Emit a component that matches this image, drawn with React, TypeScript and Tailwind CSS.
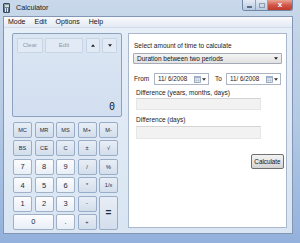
import React from 'react';

const Tri = ({ up = false, className = '' }: { up?: boolean; className?: string }) => (
  <svg viewBox="0 0 6 4" className={className}>
    <path d={up ? 'M0 4 L3 0 L6 4 Z' : 'M0 0 L6 0 L3 4 Z'} fill="currentColor" />
  </svg>
);

const CalIcon = () => (
  <svg viewBox="0 0 8 8" className="w-[7px] h-[7px]">
    <rect x="0.5" y="0.5" width="7" height="7" fill="#e8eef6" stroke="#7d8ea6" strokeWidth="0.8" />
    <rect x="0.5" y="0.5" width="7" height="2" fill="#9fb4d0" />
    <path d="M2.5 3 V7.5 M5 3 V7.5 M0.5 5 H7.5" stroke="#9aa8bb" strokeWidth="0.5" />
  </svg>
);

type Key = { label: string; kind: 'mem' | 'num'; col?: string; row?: string };

const keys: Key[] = [
  { label: 'MC', kind: 'mem' },
  { label: 'MR', kind: 'mem' },
  { label: 'MS', kind: 'mem' },
  { label: 'M+', kind: 'mem' },
  { label: 'M-', kind: 'mem' },
  { label: 'BS', kind: 'mem' },
  { label: 'CE', kind: 'mem' },
  { label: 'C', kind: 'mem' },
  { label: '±', kind: 'mem' },
  { label: '√', kind: 'mem' },
  { label: '7', kind: 'num' },
  { label: '8', kind: 'num' },
  { label: '9', kind: 'num' },
  { label: '/', kind: 'mem' },
  { label: '%', kind: 'mem' },
  { label: '4', kind: 'num' },
  { label: '5', kind: 'num' },
  { label: '6', kind: 'num' },
  { label: '*', kind: 'mem' },
  { label: '1/x', kind: 'mem' },
  { label: '1', kind: 'num' },
  { label: '2', kind: 'num' },
  { label: '3', kind: 'num' },
  { label: '-', kind: 'mem' },
  { label: '=', kind: 'mem', row: 'row-span-2' },
  { label: '0', kind: 'num', col: 'col-span-2' },
  { label: '.', kind: 'num' },
  { label: '+', kind: 'mem' },
];

const DateBox = ({ value }: { value: string }) => (
  <div className="w-[55px] h-[12px] bg-white border border-[#abb5c4] flex items-center pl-[3px] pr-[2px]">
    <span className="text-[6.3px] text-[#222] flex-1 whitespace-pre">{value}</span>
    <CalIcon />
    <Tri className="w-[4px] h-[3px] ml-[1px] text-[#333]" />
  </div>
);

export default function App() {
  return (
    <div className="w-[300px] h-[243px] overflow-hidden flex flex-col bg-gradient-to-b from-[#c9d8ea] via-[#b3c9e4] to-[#93b1dc] font-['Liberation_Sans',Arial,sans-serif] text-black">
      {/* title bar */}
      <div className="h-[16px] flex items-start shrink-0">
        <div className="mt-[3px] ml-[3px] w-[7px] h-[10px] rounded-[1px] bg-gradient-to-b from-[#8c9db3] to-[#4f5f77] border border-[#3e4a5c] flex flex-col items-center pt-[1px] gap-[1px]">
          <div className="w-[4px] h-[2px] bg-[#cfe3c8]" />
          <div className="w-[4px] h-[4px] bg-[repeating-linear-gradient(90deg,#e0e6ee_0_1px,transparent_1px_2px)]" />
        </div>
        <span className="ml-[6px] mt-[3px] text-[7.2px] leading-[9px] text-[#1a1a1a]">Calculator</span>
        <div className="ml-auto mr-[7px] flex h-[11px] rounded-b-[3px] border border-t-0 border-[#6f86a6] overflow-hidden">
          <div className="w-[13px] bg-gradient-to-b from-[#e3ebf5] to-[#b7c9df] border-r border-[#8ea3bf] flex items-center justify-center">
            <div className="w-[5px] h-[2px] bg-white border border-[#5a6d86] mt-[3px]" />
          </div>
          <div className="w-[12px] bg-gradient-to-b from-[#e3ebf5] to-[#b7c9df] border-r border-[#8ea3bf] flex items-center justify-center">
            <div className="w-[6px] h-[5px] border border-[#8e9db2] bg-transparent" />
          </div>
          <div className="w-[24px] bg-gradient-to-b from-[#e9a493] via-[#d0574a] to-[#c13a2a] flex items-center justify-center">
            <span className="text-white text-[8px] leading-none font-bold">x</span>
          </div>
        </div>
      </div>

      {/* window body */}
      <div className="flex-1 ml-[3px] mr-[7px] mb-[9px] flex flex-col border border-[#8396b3]">
        {/* menu bar */}
        <div className="h-[11px] shrink-0 bg-gradient-to-b from-[#f8fafd] to-[#e4ebf4] flex items-center pl-[4px] text-[7px] text-[#111] gap-[9px] border-b border-[#d2dbe8]">
          <span>Mode</span>
          <span>Edit</span>
          <span>Options</span>
          <span>Help</span>
        </div>

        {/* client area */}
        <div className="flex-1 flex bg-gradient-to-b from-[#e6eef8] to-[#d9e5f3] pl-[8px] pt-[5px]">
          {/* left: standard calculator */}
          <div className="flex flex-col w-[110px]">
            <div className="h-[84px] border border-[#8ea2bd] rounded-[2px] bg-gradient-to-b from-[#dbe6f3] to-[#d2dff0] flex flex-col px-[4px] pt-[4px] pb-[4px]">
              <div className="flex gap-[2px] h-[15px]">
                <div className="w-[26px] bg-[#e1eaf5] border border-[#c7d4e5] rounded-[1px] flex items-center justify-center text-[6px] text-[#8d98a8]">Clear</div>
                <div className="w-[39px] bg-[#e1eaf5] border border-[#c7d4e5] rounded-[1px] flex items-center justify-center text-[6px] text-[#8d98a8]">Edit</div>
                <div className="ml-[1px] w-[14px] bg-[#e1eaf5] border border-[#c7d4e5] rounded-[1px] flex items-center justify-center">
                  <Tri up className="w-[4px] h-[3px] text-[#222]" />
                </div>
                <div className="w-[15px] bg-[#e1eaf5] border border-[#c7d4e5] rounded-[1px] flex items-center justify-center">
                  <Tri className="w-[4px] h-[3px] text-[#222]" />
                </div>
              </div>
              <div className="flex-1 flex items-end justify-end pr-[2px]">
                <span className="font-['DejaVu_Sans_Mono',monospace] text-[10px] leading-[10px] text-[#222]">0</span>
              </div>
            </div>

            <div className="mt-[5px] ml-[1px] grid grid-cols-[repeat(5,19px)] auto-rows-[16px] gap-x-[2.5px] gap-y-[2.4px]">
              {keys.map((k) => (
                <div
                  key={k.label}
                  className={`${k.col ?? ''} ${k.row ?? ''} rounded-[2px] border flex items-center justify-center ${
                    k.kind === 'num'
                      ? 'border-[#9fb0c7] bg-gradient-to-b from-[#fbfcfe] to-[#e9eff7] text-[7.5px] text-[#1e2a3a]'
                      : 'border-[#9aadc6] bg-gradient-to-b from-[#e8eef6] to-[#d3deec] text-[5.6px] text-[#1e2a3a]'
                  } ${k.label === '=' ? 'text-[10px] font-bold' : ''}`}
                >
                  {k.label}
                </div>
              ))}
            </div>
          </div>

          {/* right: date calculation */}
          <div className="ml-[6px] mb-[5px] w-[159px] bg-white border border-[#a9b8cc] flex flex-col pl-[4px] pr-[4px]">
            <div className="mt-[8px] ml-[1px] text-[6.5px] leading-[8px] text-[#1a1a1a]">Select amount of time to calculate</div>
            <div className="mt-[3px] h-[11px] border border-[#a4abb6] rounded-[1px] bg-gradient-to-b from-[#f4f4f4] to-[#e2e2e2] flex items-center pl-[3px] pr-[3px]">
              <span className="flex-1 text-[6.5px] text-[#111]">Duration between two periods</span>
              <Tri className="w-[4px] h-[3px] text-[#222]" />
            </div>
            <div className="mt-[9px] flex items-center h-[12px]">
              <span className="ml-[1px] w-[20px] text-[6.5px] text-[#1a1a1a]">From</span>
              <DateBox value="11/ 6/2008" />
              <span className="ml-[6px] w-[11px] text-[6.5px] text-[#1a1a1a]">To</span>
              <DateBox value="11/ 6/2008" />
            </div>
            <div className="mt-[4px] ml-[3px] text-[6.5px] leading-[8px] text-[#1a1a1a]">Difference (years, months, days)</div>
            <div className="mt-[1px] ml-[3px] w-[125px] h-[12px] bg-[#f2f2f2] border border-[#e6e6e6] border-t-[#d4d4d4]" />
            <div className="mt-[6px] ml-[3px] text-[6.5px] leading-[8px] text-[#1a1a1a]">Difference (days)</div>
            <div className="mt-[2px] ml-[3px] w-[125px] h-[13px] bg-[#f2f2f2] border border-[#e6e6e6] border-t-[#d4d4d4]" />
            <div className="mt-[15px] mr-[-2px] self-end w-[33px] h-[15px] rounded-[2px] border border-[#707070] bg-gradient-to-b from-[#f2f2f2] via-[#e6e6e6] to-[#d3d3d3] flex items-center justify-center text-[6.3px] text-[#111]">
              Calculate
            </div>
          </div>
        </div>
      </div>
    </div>
  );
}
